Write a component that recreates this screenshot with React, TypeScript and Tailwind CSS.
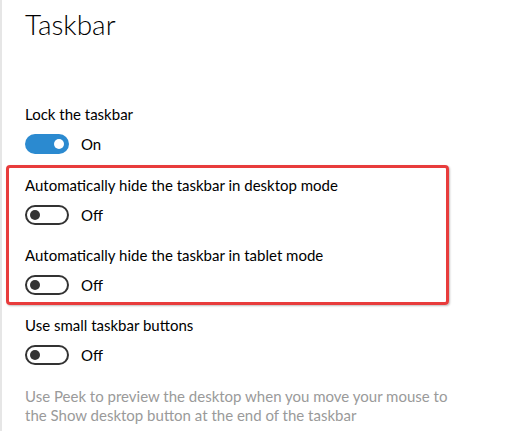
const font = { fontFamily: 'Lato, "Open Sans", sans-serif' };

type ToggleProps = { on?: boolean };

function Toggle({ on = false }: ToggleProps) {
  return (
    <div className="flex items-center h-[20px]">
      {on ? (
        <div className="w-[44px] h-[20px] rounded-full bg-[#2b8ad0] flex items-center justify-end pr-[5px]">
          <div className="w-[10px] h-[10px] rounded-full bg-white" />
        </div>
      ) : (
        <div className="w-[44px] h-[20px] rounded-full border-2 border-[#333333] flex items-center pl-[3px]">
          <div className="w-[10px] h-[10px] rounded-full bg-[#333333]" />
        </div>
      )}
      <span className="ml-[12px] text-[15px] text-black leading-[20px]">{on ? "On" : "Off"}</span>
    </div>
  );
}

function Setting({ label, on }: { label: string; on?: boolean }) {
  return (
    <div className="flex flex-col">
      <div className="text-[15px] leading-[20px] text-black">{label}</div>
      <div className="mt-[10px]">
        <Toggle on={on} />
      </div>
    </div>
  );
}

export default function App() {
  return (
    <div
      className="w-[509px] h-[431px] bg-white border-l-2 border-[#e6e6e6] overflow-hidden"
      style={font}
    >
      <div className="pl-[23px] pt-[4px] text-[28px] font-light leading-[40px] text-black">
        Taskbar
      </div>
      <div className="pl-[23px] mt-[60px]">
        <Setting label="Lock the taskbar" on />
      </div>
      <div className="ml-[4px] mt-[11px] w-[443px] rounded-[4px] border-[3px] border-[#e83c3c] pl-[16px] pt-[7px] pb-[7px] shadow-[1px_1px_2px_rgba(0,0,0,0.25)]">
        <Setting label="Automatically hide the taskbar in desktop mode" />
        <div className="mt-[20px]">
          <Setting label="Automatically hide the taskbar in tablet mode" />
        </div>
      </div>
      <div className="pl-[23px] mt-[10px]">
        <Setting label="Use small taskbar buttons" />
      </div>
      <div className="pl-[23px] mt-[22px] text-[15px] leading-[19px] text-[#9a9a9a]">
        Use Peek to preview the desktop when you move your mouse to
        <br />
        the Show desktop button at the end of the taskbar
      </div>
    </div>
  );
}
